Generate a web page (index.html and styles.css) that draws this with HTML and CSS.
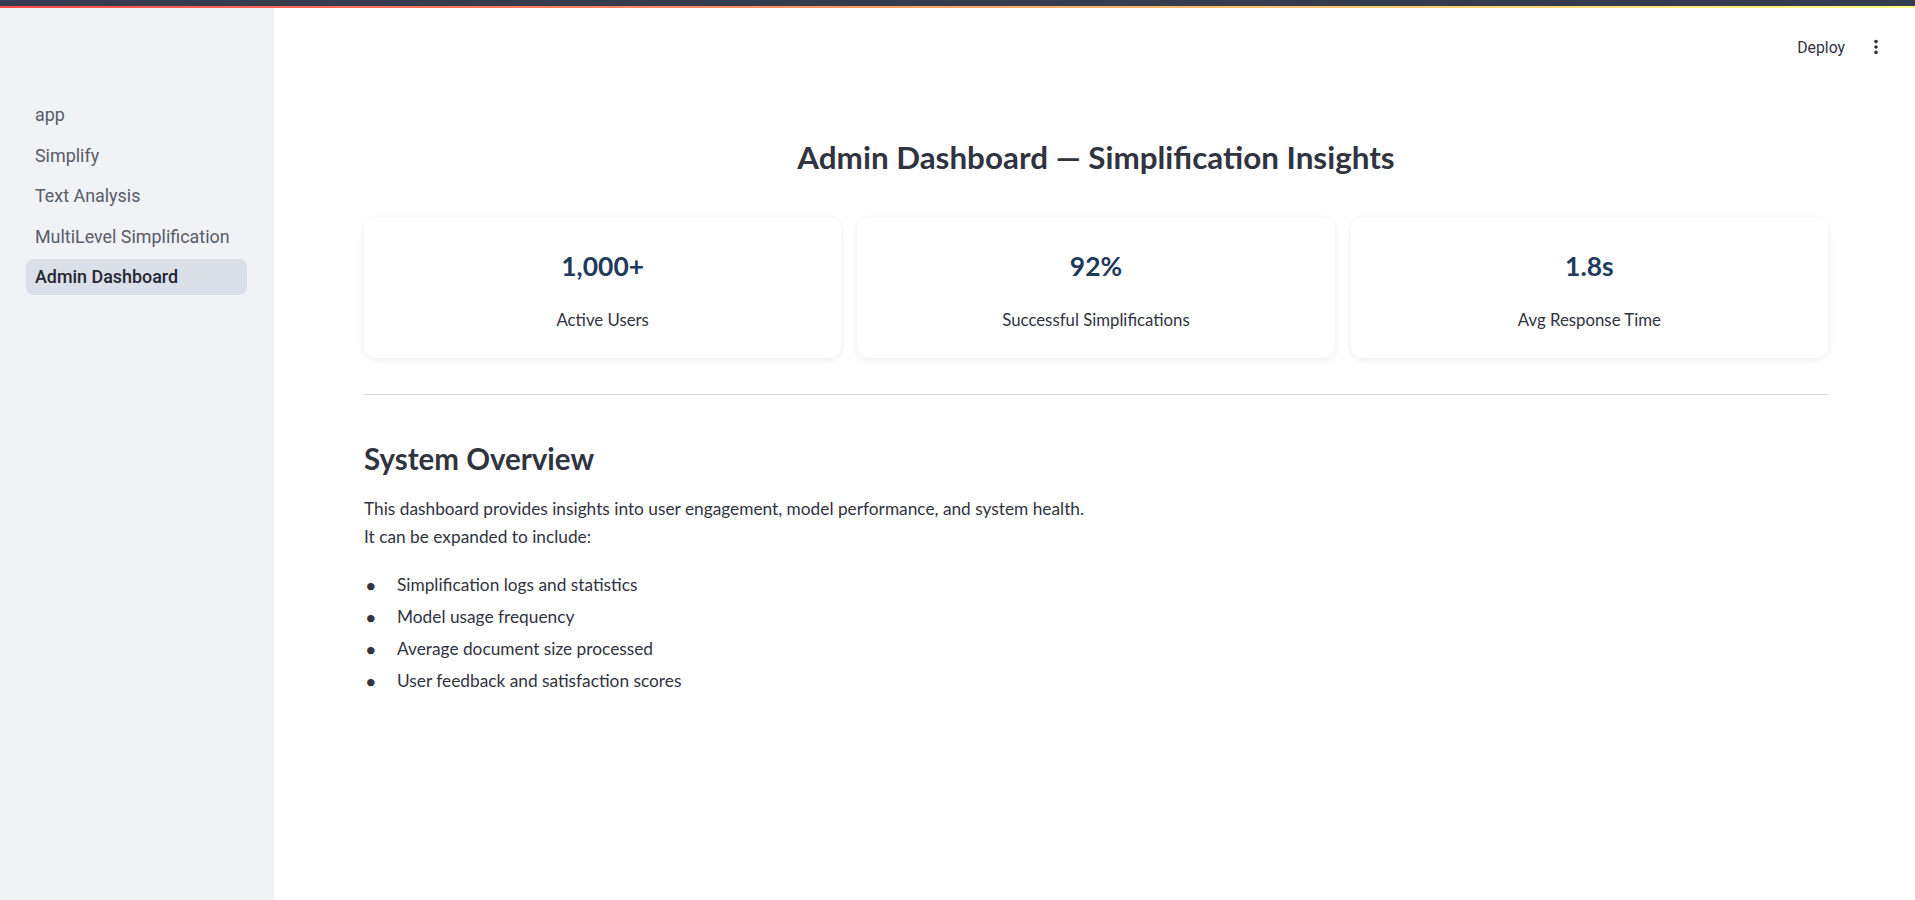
FILE: index.html
```html
<!DOCTYPE html>
<html lang="en">
<head>
<meta charset="utf-8">
<title>Admin Dashboard</title>
<link rel="stylesheet" href="styles.css">
</head>
<body>
<div class="topbar"></div>
<div class="decoration"></div>
<div class="app">
  <aside class="sidebar">
    <nav class="nav">
      <a class="nav-item">app</a>
      <a class="nav-item">Simplify</a>
      <a class="nav-item">Text Analysis</a>
      <a class="nav-item">MultiLevel Simplification</a>
      <a class="nav-item active">Admin Dashboard</a>
    </nav>
  </aside>
  <main class="main">
    <header class="toolbar">
      <span class="deploy">Deploy</span>
      <span class="kebab">
        <svg width="16" height="16" viewBox="0 0 16 16"><circle cx="8" cy="2.6" r="1.8" fill="#31333f"/><circle cx="8" cy="8" r="1.8" fill="#31333f"/><circle cx="8" cy="13.4" r="1.8" fill="#31333f"/></svg>
      </span>
    </header>
    <div class="block">
      <h2 class="title">Admin Dashboard — Simplification Insights</h2>
      <div class="cards">
        <div class="card"><div class="value">1,000+</div><div class="label">Active Users</div></div>
        <div class="card"><div class="value">92%</div><div class="label">Successful Simplifications</div></div>
        <div class="card"><div class="value">1.8s</div><div class="label">Avg Response Time</div></div>
      </div>
      <hr class="divider">
      <h3 class="section">System Overview</h3>
      <p class="text">This dashboard provides insights into user engagement, model performance, and system health.<br>It can be expanded to include:</p>
      <ul class="list">
        <li>Simplification logs and statistics</li>
        <li>Model usage frequency</li>
        <li>Average document size processed</li>
        <li>User feedback and satisfaction scores</li>
      </ul>
    </div>
  </main>
</div>
</body>
</html>
```
FILE: styles.css
```css
* { box-sizing: border-box; }
html, body { margin: 0; padding: 0; }
body {
  font-family: "Lato", "Liberation Sans", sans-serif;
  color: #31333f;
  background: #ffffff;
  overflow: hidden;
}
.topbar { height: 6px; background: #353c50; }
.decoration {
  height: 2px;
  background: linear-gradient(90deg, #ff4b4b, #fffd80);
}
.app { display: flex; height: 892px; }
.sidebar {
  width: 274px;
  flex: 0 0 274px;
  background: #f0f2f6;
  padding: 89px 27px 0 26px;
}
.nav { display: flex; flex-direction: column; gap: 4.6px; }
.nav-item {
  display: block;
  height: 36px;
  line-height: 36px;
  padding: 0 9px;
  border-radius: 8px;
  font-family: "Roboto", "Liberation Sans", sans-serif;
  font-size: 17.9px;
  color: #585b68;
  white-space: nowrap;
}
.nav-item.active {
  background: #dbdfe8;
  color: #262730;
  font-weight: 500;
}
.main { flex: 1; display: flex; flex-direction: column; }
.toolbar {
  height: 78px;
  display: flex;
  align-items: center;
  justify-content: flex-end;
  padding-right: 31px;
  gap: 23px;
}
.deploy {
  font-family: "Roboto", "Liberation Sans", sans-serif;
  font-size: 15.8px;
  color: #31333f;
}
.kebab { display: flex; align-items: center; }
.block { padding: 0 87px 0 90px; }
.title {
  margin: 48px 0 0;
  text-align: center;
  font-size: 31.4px;
  line-height: 47px;
  font-weight: 700;
}
.cards {
  margin-top: 36px;
  display: grid;
  grid-template-columns: repeat(3, 1fr);
  gap: 16px;
}
.card {
  height: 141px;
  background: #fff;
  border-radius: 12px;
  box-shadow: 0 2px 8px rgba(0, 0, 0, 0.08);
  display: flex;
  flex-direction: column;
  align-items: center;
  padding-top: 31px;
}
.value {
  font-size: 26.4px;
  line-height: 36px;
  font-weight: 700;
  color: #1f3a5c;
}
.label {
  margin-top: 22px;
  font-size: 16.8px;
  line-height: 28px;
}
.divider {
  margin: 36px 0 0;
  border: 0;
  border-top: 1px solid #d6d6d9;
}
.section {
  margin: 45px 0 0;
  font-size: 29.5px;
  line-height: 37px;
  font-weight: 700;
}
.text {
  margin: 18px 0 0;
  font-size: 17.3px;
  line-height: 28px;
}
.list {
  margin: 20px 0 0;
  padding: 0;
  list-style: none;
  font-size: 17.3px;
  line-height: 28px;
}
.list li {
  display: flex;
  margin-bottom: 4px;
}
.list li::before {
  content: "•";
  flex: 0 0 32px;
  padding-left: 1px;
  font-size: 20px;
}
```
